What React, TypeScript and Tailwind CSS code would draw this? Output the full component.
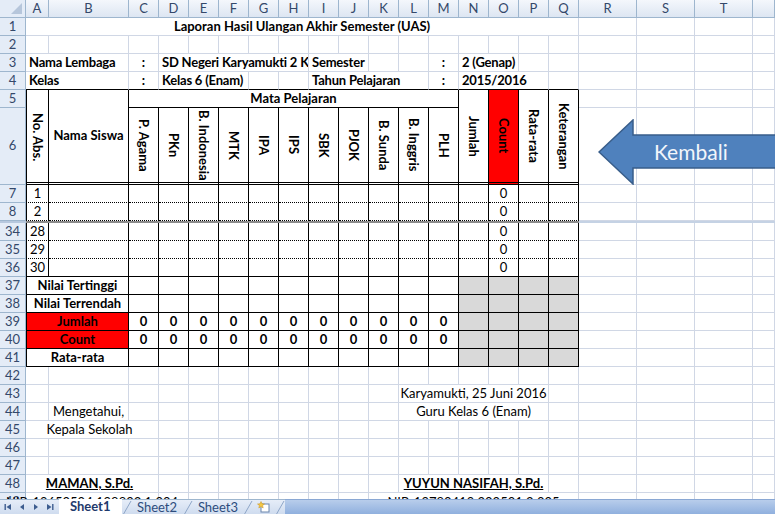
import React from 'react';

// Excel 2007 style sheet: "Laporan Hasil Ulangan Akhir Semester"
const LETTERS = 'ABCDEFGHIJKLMNOPQRSTU'.split('');
const ROWS = ['1', '2', '3', '4', '5', '6', '7', '8', 'split', '34', '35', '36', '37', '38', '39', '40', '41', '42', '43', '44', '45', '46', '47', '48', '49'];

type Seg = { c: string; cs?: number; rs?: number; t?: React.ReactNode; k?: string };

const SPAN: Record<number, string> = {
    1: '',
    2: 'col-span-2',
    3: 'col-span-3',
    4: 'col-span-4',
    5: 'col-span-5',
    7: 'col-span-7',
    11: 'col-span-11',
    17: 'col-span-17',
};

const L = 'pl-[3px] font-bold tracking-[-0.2px]';
const MID = 'justify-center';
const HEAD = 'justify-center font-bold';
const RED = 'bg-[#ff0000] text-[#9c0006]';
const GREY = 'bg-[#d9d9d9]';

const V = ({ children }: { children: React.ReactNode }) => (
    <span className="[writing-mode:vertical-rl] whitespace-nowrap font-bold leading-[16px]">{children}</span>
);

const SUBJECTS = ['P. Agama', 'PKn', 'B. Indonesia', 'MTK', 'IPA', 'IPS', 'SBK', 'PJOK', 'B. Sunda', 'B. Inggris', 'PLH'];
const SUBJECT_COLS = 'CDEFGHIJKLM'.split('');

const student = (no: string): Seg[] => [
    { c: 'A', t: no, k: MID },
    { c: 'O', t: '0', k: MID },
];
const greys: Seg[] = ['N', 'O', 'P', 'Q'].map((c) => ({ c, k: GREY }));
const zeros: Seg[] = SUBJECT_COLS.map((c) => ({ c, t: '0', k: 'justify-center font-bold' }));

const CONTENT: Record<string, Seg[]> = {
    '1': [{ c: 'A', cs: 17, t: 'Laporan Hasil Ulangan Akhir Semester (UAS)', k: HEAD }],
    '3': [
        { c: 'A', cs: 2, t: 'Nama Lembaga', k: L },
        { c: 'C', t: ':', k: HEAD },
        { c: 'D', cs: 5, t: 'SD Negeri Karyamukti 2 Kecamatan', k: L },
        { c: 'I', cs: 2, t: 'Semester', k: L },
        { c: 'M', t: ':', k: HEAD },
        { c: 'N', cs: 2, t: '2 (Genap)', k: L },
    ],
    '4': [
        { c: 'A', cs: 2, t: 'Kelas', k: L },
        { c: 'C', t: ':', k: HEAD },
        { c: 'D', cs: 3, t: 'Kelas 6 (Enam)', k: L },
        { c: 'I', cs: 4, t: 'Tahun Pelajaran', k: L },
        { c: 'M', t: ':', k: HEAD },
        { c: 'N', cs: 3, t: '2015/2016', k: L },
    ],
    '5': [
        { c: 'A', rs: 2, t: <V>No. Abs.</V>, k: 'justify-center pt-[2px]' },
        { c: 'B', rs: 2, t: 'Nama Siswa', k: HEAD },
        { c: 'C', cs: 11, t: 'Mata Pelajaran', k: HEAD },
        { c: 'N', rs: 2, t: <V>Jumlah</V>, k: MID },
        { c: 'O', rs: 2, t: <V>Count</V>, k: `${MID} ${RED}` },
        { c: 'P', rs: 2, t: <V>Rata-rata</V>, k: MID },
        { c: 'Q', rs: 2, t: <V>Keterangan</V>, k: MID },
    ],
    '6': SUBJECTS.map((s, i) => ({ c: SUBJECT_COLS[i], t: <V>{s}</V>, k: MID })),
    '7': student('1'),
    '8': student('2'),
    '34': student('28'),
    '35': student('29'),
    '36': student('30'),
    '37': [{ c: 'A', cs: 2, t: 'Nilai Tertinggi', k: HEAD }, ...greys],
    '38': [{ c: 'A', cs: 2, t: 'Nilai Terrendah', k: HEAD }, ...greys],
    '39': [{ c: 'A', cs: 2, t: 'Jumlah', k: `${HEAD} ${RED}` }, ...zeros, ...greys],
    '40': [{ c: 'A', cs: 2, t: 'Count', k: `${HEAD} ${RED}` }, ...zeros, ...greys],
    '41': [{ c: 'A', cs: 2, t: 'Rata-rata', k: HEAD }, ...greys],
    '43': [{ c: 'L', cs: 5, t: 'Karyamukti, 25 Juni 2016', k: MID }],
    '44': [
        { c: 'B', t: 'Mengetahui,', k: MID },
        { c: 'L', cs: 5, t: 'Guru Kelas 6 (Enam)', k: MID },
    ],
    '45': [{ c: 'A', cs: 3, t: 'Kepala Sekolah', k: 'justify-center pr-[5px]' }],
    '48': [
        { c: 'A', cs: 3, t: 'MAMAN, S.Pd.', k: 'justify-center pr-[5px] font-bold underline' },
        { c: 'L', cs: 5, t: 'YUYUN NASIFAH, S.Pd.', k: 'justify-center font-bold underline' },
    ],
    '49': [
        { c: 'A', cs: 3, t: 'NIP. 19650504 198803 1 004', k: 'justify-center items-start overflow-visible' },
        { c: 'K', cs: 7, t: 'NIP. 19780419 200501 2 005', k: 'justify-center items-start' },
    ],
};

const GRID = 'border-r border-b border-r-[#d0d7e5] border-b-[#d0d7e5]';

function borders(top: string, bottom: string, c0: number, c1: number) {
    const t = parseInt(top);
    const n = parseInt(bottom);
    const inTable = t >= 5 && n <= 41 && c1 <= 17;
    if (!inTable) {
        if (n === 4 && c1 <= 17) return 'border-r border-r-[#d0d7e5] border-b border-b-black';
        return GRID;
    }
    const out = ['border-r border-r-black'];
    if (c0 === 1) out.push('border-l border-l-black');
    if ([7, 8, 34, 35].includes(n)) out.push('border-b border-b-black [border-bottom-style:dotted]');
    else if (n === 6) out.push('border-b-[3px] border-b-black [border-bottom-style:double]');
    else out.push('border-b border-b-black');
    return out.join(' ');
}

function Sheet() {
    const cells: React.ReactNode[] = [];

    // corner + column headers
    cells.push(
        <div key="corner" className="relative bg-[#e4ecf7] border-r border-b border-[#9eb6ce]">
            <svg className="absolute right-[3px] bottom-[3px]" width="11" height="11" viewBox="0 0 11 11">
                <polygon points="11,0 11,11 0,11" fill="#b6c6db" />
            </svg>
        </div>
    );
    LETTERS.forEach((l, i) =>
        cells.push(
            <div
                key={'h' + l}
                className="flex items-center justify-center bg-linear-to-b from-[#f4f7fc] to-[#dde6f2] border-r border-b border-[#9eb6ce] text-[#34486a] text-[13px]"
            >
                {i < 20 ? l : ''}
            </div>
        )
    );

    const covered = new Set<string>();
    ROWS.forEach((row, ri) => {
        if (row === 'split') {
            cells.push(<div key="s0" className="bg-[#b7c8de]" />);
            cells.push(<div key="s1" className="col-span-17 bg-[#8c8c8c]" />);
            cells.push(<div key="s2" className="col-span-4 bg-[#c5d2e4]" />);
            return;
        }
        cells.push(
            <div
                key={'r' + row}
                className="flex items-center justify-center bg-[#e4ecf7] border-r border-b border-[#9eb6ce] text-[#34486a] text-[13px]"
            >
                {row}
            </div>
        );
        const segs = CONTENT[row] ?? [];
        let c = 1;
        while (c <= 21) {
            if (covered.has(row + ':' + c)) {
                c++;
                continue;
            }
            const seg = segs.find((s) => LETTERS.indexOf(s.c) + 1 === c);
            const cs = seg?.cs ?? 1;
            const rs = seg?.rs ?? 1;
            for (let k = 1; k < rs; k++) for (let j = 0; j < cs; j++) covered.add(ROWS[ri + k] + ':' + (c + j));
            cells.push(
                <div
                    key={row + '-' + c}
                    className={`flex items-center whitespace-nowrap overflow-hidden text-[13px] text-black ${SPAN[cs]} ${rs > 1 ? 'row-span-2' : ''} ${borders(row, ROWS[ri + rs - 1], c, c + cs - 1)} ${seg?.k ?? ''}`}
                >
                    {seg?.t}
                </div>
            );
            c += cs;
        }
    });

    return (
        <div className="relative h-[499px] overflow-hidden bg-white">
            <div className="grid grid-cols-[26px_23px_80px_repeat(15,30px)_58px_58px_58px_1fr] grid-rows-[18px_18px_18px_18px_18px_18px_77px_18px_18px_2px_repeat(16,18px)]">
                {cells}
            </div>

            {/* Kembali arrow shape */}
            <div className="absolute left-[598px] top-[119px] w-[200px] h-[66px]">
                <svg width="200" height="66" viewBox="0 0 200 66" className="absolute inset-0">
                    <polygon
                        points="1,33 35,1 35,16 199,16 199,49 35,49 35,65"
                        fill="#4f81bd"
                        stroke="#385d8a"
                        strokeWidth="1.5"
                    />
                </svg>
                <span className="absolute left-[56px] top-[20px] text-[21px] leading-[26px] text-[#f2f6fb]">Kembali</span>
            </div>
        </div>
    );
}

function NavIcon({ kind }: { kind: 'first' | 'prev' | 'next' | 'last' }) {
    return (
        <svg width="8" height="8" viewBox="0 0 8 8" className="text-[#3d5d8f]">
            {kind === 'first' && (
                <>
                    <rect x="0.5" y="1" width="1.4" height="6" fill="currentColor" />
                    <polygon points="7,1 7,7 2.5,4" fill="currentColor" />
                </>
            )}
            {kind === 'prev' && <polygon points="6,1 6,7 2,4" fill="currentColor" />}
            {kind === 'next' && <polygon points="2,1 2,7 6,4" fill="currentColor" />}
            {kind === 'last' && (
                <>
                    <polygon points="1,1 1,7 5.5,4" fill="currentColor" />
                    <rect x="6.1" y="1" width="1.4" height="6" fill="currentColor" />
                </>
            )}
        </svg>
    );
}

const Slash = () => (
    <svg width="10" height="15" viewBox="0 0 10 15" className="shrink-0">
        <line x1="1" y1="15" x2="9" y2="1" stroke="#8ea6c8" strokeWidth="1" />
    </svg>
);

function TabBar() {
    return (
        <div className="h-[15px] flex text-[13px] leading-[15px]">
            <div className="w-[285px] flex items-stretch bg-linear-to-b from-[#e6edf8] to-[#cfdcef] border-t border-[#9eb6ce]">
                <div className="w-[60px] flex items-center gap-[6px] pl-[4px]">
                    <NavIcon kind="first" />
                    <NavIcon kind="prev" />
                    <NavIcon kind="next" />
                    <NavIcon kind="last" />
                </div>
                <div className="w-[64px] flex items-center justify-center bg-white font-bold text-[#1f3a6c] -mt-px">Sheet1</div>
                <Slash />
                <div className="w-[52px] flex items-center justify-center text-[#2d4d7e]">Sheet2</div>
                <Slash />
                <div className="w-[52px] flex items-center justify-center text-[#2d4d7e]">Sheet3</div>
                <Slash />
                <div className="w-[22px] flex items-center justify-center">
                    <svg width="14" height="12" viewBox="0 0 14 12">
                        <rect x="4" y="3" width="8" height="8" fill="#ffffff" stroke="#6b86ad" strokeWidth="1" />
                        <polygon points="4,0.5 5,2.8 7.5,3 5.6,4.5 6.2,7 4,5.6 1.8,7 2.4,4.5 0.5,3 3,2.8" fill="#f5c842" stroke="#c8901e" strokeWidth="0.5" />
                    </svg>
                </div>
                <Slash />
            </div>
            <div className="flex-1 bg-linear-to-b from-[#b8cdeb] to-[#90b0de] border-t border-[#8aa8d4]" />
        </div>
    );
}

export default function App() {
    return (
        <div className="w-[775px] h-[514px] overflow-hidden [font-family:Lato,'Liberation_Sans',sans-serif]">
            <Sheet />
            <TabBar />
        </div>
    );
}
